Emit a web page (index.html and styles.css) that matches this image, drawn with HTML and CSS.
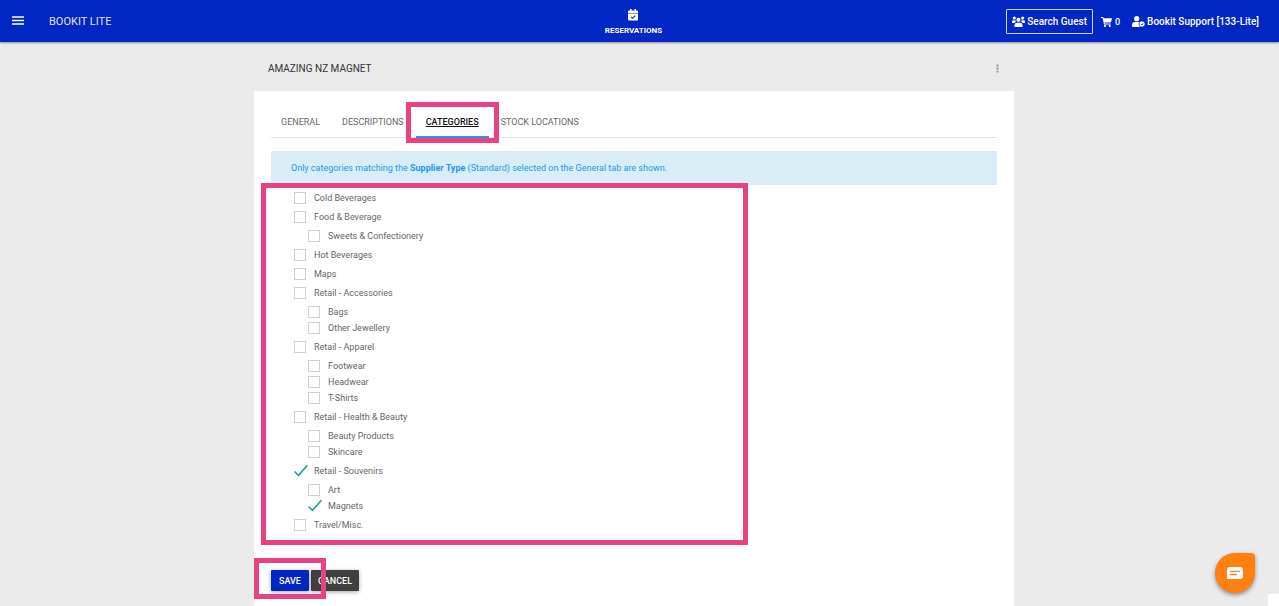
FILE: index.html
```html
<!DOCTYPE html>
<html lang="en">
<head>
  <meta charset="UTF-8" />
  <meta name="viewport" content="width=device-width, initial-scale=1" />
  <title>Bookit Lite - Amazing NZ Magnet</title>
  <link rel="stylesheet" href="styles.css">
</head>
<body>

<header class="topbar">
  <div class="topbar-left">
    <button class="menu-button" type="button" aria-label="Menu">
      <svg width="12" height="10" viewBox="0 0 12 10"><path d="M0 1h12M0 4.5h12M0 8h12" stroke="#fff" stroke-width="1.6"/></svg>
    </button>
    <a class="brand" href="#">BOOKIT LITE</a>
  </div>
  <a class="topbar-nav" href="#">
    <svg width="10" height="12" viewBox="0 0 10 12">
      <path fill="#fff" d="M2 0h1.5v1.5h3V0H8v1.5h1a1 1 0 0 1 1 1V4H0V2.500a1 1 0 0 1 1-1h1zM0 4.600h10V10.500a1 1 0 0 1-1 1H1a1 1 0 0 1-1-1z"/>
      <path d="M3 7.800l1.500 1.500L7.200 6.600" fill="none" stroke="#0026c4" stroke-width="1.100"/>
    </svg>
    <span>RESERVATIONS</span>
  </a>
  <div class="topbar-right">
    <button class="search-button" type="button">
      <svg width="13" height="11" viewBox="0 0 13 11" fill="#fff">
        <circle cx="2.300" cy="2" r="1.600"/><circle cx="10.700" cy="2" r="1.600"/><circle cx="6.500" cy="3.800" r="2.100"/>
        <path d="M0 7V5.600A1.500 1.500 0 0 1 1.500 4.200h1.800l.5 1.400L2.800 7zM13 7V5.600a1.500 1.500 0 0 0-1.500-1.400H9.700l-.5 1.400L10.200 7zM2.500 11V9.300a2.600 2.600 0 0 1 2.600-2.600h2.800a2.600 2.600 0 0 1 2.600 2.600V11z"/>
      </svg>
      Search Guest
    </button>
    <a class="cart-link" href="#">
      <svg width="11" height="10" viewBox="0 0 11 10" fill="#fff">
        <path d="M0 0h2.300l.3 1.200H11L9.900 5.600H3.600l.2 1h5.700v1H3L1.600 1.100H0z"/>
        <circle cx="4" cy="8.900" r="1.100"/><circle cx="8.700" cy="8.900" r="1.100"/>
      </svg>
      0
    </a>
    <a class="user-link" href="#">
      <svg width="13" height="11" viewBox="0 0 13 11">
        <circle cx="4.700" cy="2.700" r="2.600" fill="#fff"/>
        <path fill="#fff" d="M0 11V9a3 3 0 0 1 3-3h3.500a3 3 0 0 1 3 3v2z"/>
        <circle cx="10" cy="8" r="3.100" fill="#fff" stroke="#0026c4" stroke-width=".7"/>
        <path d="M8.800 8l1 1 1.500-1.700" fill="none" stroke="#0026c4" stroke-width=".8"/>
      </svg>
      Bookit Support [133-Lite]
    </a>
  </div>
</header>

<main class="page">
  <div class="page-head">
    <h1>AMAZING NZ MAGNET</h1>
    <button class="more-button" type="button" aria-label="More">
      <svg width="3" height="9" viewBox="0 0 3 9" fill="#999"><path d="M0.500 0.500h2v2h-2zM0.500 3.500h2v2h-2zM0.500 6.500h2v2h-2z"/></svg>
    </button>
  </div>

  <div class="card">
    <nav class="tabs">
      <a class="tab" href="#">GENERAL</a>
      <a class="tab" href="#">DESCRIPTIONS</a>
      <a class="tab active" href="#"><u>CATEGORIES</u><span class="highlight highlight-tab"></span></a>
      <a class="tab" href="#">STOCK LOCATIONS</a>
    </nav>

    <p class="notice">Only categories matching the <strong>Supplier Type</strong> (Standard) selected on the General tab are shown.</p>

    <div class="categories">
      <ul class="category-list">
        <li><label><input type="checkbox">Cold Beverages</label></li>
        <li><label><input type="checkbox">Food &amp; Beverage</label>
          <ul>
            <li><label><input type="checkbox">Sweets &amp; Confectionery</label></li>
          </ul>
        </li>
        <li><label><input type="checkbox">Hot Beverages</label></li>
        <li><label><input type="checkbox">Maps</label></li>
        <li><label><input type="checkbox">Retail - Accessories</label>
          <ul>
            <li><label><input type="checkbox">Bags</label></li>
            <li><label><input type="checkbox">Other Jewellery</label></li>
          </ul>
        </li>
        <li><label><input type="checkbox">Retail - Apparel</label>
          <ul>
            <li><label><input type="checkbox">Footwear</label></li>
            <li><label><input type="checkbox">Headwear</label></li>
            <li><label><input type="checkbox">T-Shirts</label></li>
          </ul>
        </li>
        <li><label><input type="checkbox">Retail - Health &amp; Beauty</label>
          <ul>
            <li><label><input type="checkbox">Beauty Products</label></li>
            <li><label><input type="checkbox">Skincare</label></li>
          </ul>
        </li>
        <li><label><input type="checkbox" checked>Retail - Souvenirs</label>
          <ul>
            <li><label><input type="checkbox">Art</label></li>
            <li><label><input type="checkbox" checked>Magnets</label></li>
          </ul>
        </li>
        <li><label><input type="checkbox">Travel/Misc.</label></li>
      </ul>
      <span class="highlight highlight-list"></span>
    </div>

    <div class="actions">
      <span class="save-wrap">
        <button class="btn btn-save" type="submit">SAVE</button>
        <span class="highlight highlight-save"></span>
      </span>
      <button class="btn btn-cancel" type="button">CANCEL</button>
    </div>
  </div>
</main>

<button class="chat-button" type="button" aria-label="Chat">
  <svg width="16" height="13" viewBox="0 0 16 13">
    <path fill="#fff" d="M3 0h10a3 3 0 0 1 3 3v6a3 3 0 0 1-3 3H0V3a3 3 0 0 1 3-3z"/>
    <path d="M3.500 4.300h9M3.500 7.500h6" stroke="#ff7f11" stroke-width="1.300" stroke-linecap="round"/>
  </svg>
</button>
<div class="scroll-corner"></div>

</body>
</html>
```

FILE: styles.css
```css
* { box-sizing: border-box; }
body {
  font-family: Roboto, "Liberation Sans", sans-serif;
  font-size: 9px;
  margin: 0;
  min-height: 100vh;
  display: flex; flex-direction: column;
  background: #ebebeb;
  color: #666;
}
a { color: inherit; text-decoration: none; }
button {
  font-family: inherit; cursor: pointer;
  border: none; padding: 0; background: none;
}
svg { display: block; flex: none; }

.topbar {
  display: grid; grid-template-columns: 1fr auto 1fr;
  align-items: center;
  height: 42px; padding: 0 20px 0 12px;
  background: #0026c4; color: #fff;
  box-shadow: 0 1px 2px rgb(0 0 0 / 0.4);
}
.topbar-left { display: flex; align-items: center; gap: 25px; }
.brand { font-size: 11px; color: #e0e4f8; }
.topbar-nav {
  display: flex; flex-direction: column; align-items: center; gap: 5px;
  padding: 2px 4px 0 0;
  font-size: 8px; line-height: 10px; font-weight: 700;
}
.topbar-right {
  display: flex; align-items: center; justify-content: flex-end;
  font-size: 10px; font-weight: 500;
}
.search-button {
  display: flex; align-items: center; gap: 2px;
  height: 25px; padding: 0 5px;
  border: 1px solid #ccd3f5; border-radius: 1px;
  color: #fff; font-size: 10px; font-weight: 500;
}
.cart-link { display: flex; align-items: center; gap: 3px; margin: 0 12px 0 8px; padding-top: 2px; font-size: 9px; }
.user-link { display: flex; align-items: center; gap: 2px; }

.page {
  flex: 1;
  display: flex; flex-direction: column;
  width: 100%; max-width: 771px;
  margin: 0 auto; padding-right: 11px;
}
.page-head {
  display: flex; align-items: center; justify-content: space-between;
  padding: 20px 15px 16px 14px;
}
.page-head h1 { margin: 0; font-size: 10px; line-height: 13px; font-weight: 400; color: #333; }

.card { flex: 1; background: #fff; padding: 17px 17px 15px; }
.tabs { display: flex; border-bottom: 1px solid #e4e4e4; }
.tab {
  position: relative;
  padding: 7px 10px 8px; margin-right: 2px;
  line-height: 14px; color: #666;
}
.tab.active { font-weight: 500; color: #111; box-shadow: 0 1px #2196f3, inset 0 -1px #2196f3; }

.notice {
  margin: 13px 0 0; padding: 10px 20px;
  border-radius: 1px;
  line-height: 14px;
  background: #d9edf7; color: #2196f3;
}
.notice strong { font-weight: 700; }

.categories { position: relative; padding: 5px 23px; }
.category-list, .category-list ul { list-style: none; margin: 0; padding: 0; }
.category-list { display: flex; flex-direction: column; gap: 3px; }
.category-list ul { margin-top: 3px; padding-left: 14px; }
.category-list label { display: flex; align-items: center; height: 16px; }
.category-list input {
  appearance: none;
  width: 12px; height: 12px; margin: 0 8px 0 0;
  border: 1px solid #d0d0d0; background: #fff;
}
/* ticked boxes drop the frame and show only the tick */
.category-list input:checked {
  width: 14px; margin-right: 6px;
  border: none;
  background: url("data:image/svg+xml,%3Csvg xmlns='http://www.w3.org/2000/svg' viewBox='0 0 14 12'%3E%3Cpath d='M0.500 6.500L4.500 10.300L13.500 0.200' fill='none' stroke='%23129c8e' stroke-width='1.500'/%3E%3C/svg%3E") no-repeat;
}

.actions { display: flex; gap: 2px; margin-top: 32px; }
.save-wrap { position: relative; display: flex; }
.btn {
  height: 21px; padding: 0 8px;
  border-radius: 1px; color: #fff;
  font-size: 9px; font-weight: 500;
  box-shadow: 0 1px 4px rgb(0 0 0 / 0.35);
}
.btn-save { background: #0026c4; }
.btn-cancel { padding: 0 7px; background: #3f3f3f; }

.highlight { position: absolute; z-index: 2; border: 5px solid #e84282; pointer-events: none; }
.highlight-tab { inset: -6px -10px; }
.highlight-list { top: -2px; left: -10px; width: 487px; bottom: -7px; }
.highlight-save { inset: -12px -17px -8px; }

.chat-button {
  position: fixed; right: 24px; bottom: 13px;
  display: flex; align-items: center; justify-content: center;
  width: 40px; height: 40px;
  border-radius: 50% 4px 50% 50%;
  background: #ff7f11;
  box-shadow: 0 2px 4px rgb(0 0 0 / 0.4);
}
.scroll-corner { position: fixed; right: 0; bottom: 0; width: 11px; height: 12px; background: #fff; }
```
